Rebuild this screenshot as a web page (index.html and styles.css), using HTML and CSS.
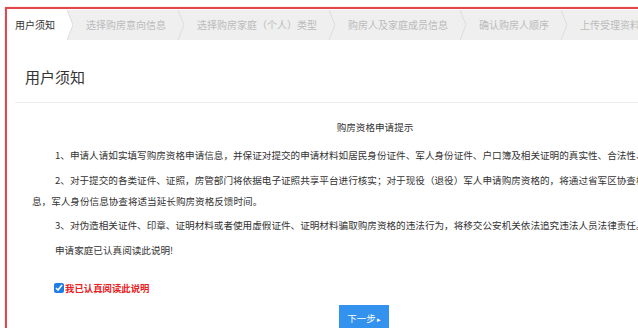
FILE: index.html
```html
<!DOCTYPE html>
<html lang="zh-CN">
<head>
<meta charset="utf-8">
<title>用户须知</title>
<link rel="stylesheet" href="styles.css">
</head>
<body>
<div class="frame">
  <div class="steps">
    <div class="step active first">用户须知</div>
    <svg class="chev" width="6" height="30" viewBox="0 0 6 30"><polygon points="0,0 6,15 0,30" fill="#fff"/><polyline points="0,0 6,15 0,30" fill="none" stroke="#dcdcdc" stroke-width="1"/></svg>
    <div class="step">选择购房意向信息</div>
    <svg class="chev" width="6" height="30" viewBox="0 0 6 30"><polyline points="0,0 6,15 0,30" fill="none" stroke="#dcdcdc" stroke-width="1"/></svg>
    <div class="step">选择购房家庭（个人）类型</div>
    <svg class="chev" width="6" height="30" viewBox="0 0 6 30"><polyline points="0,0 6,15 0,30" fill="none" stroke="#dcdcdc" stroke-width="1"/></svg>
    <div class="step">购房人及家庭成员信息</div>
    <svg class="chev" width="6" height="30" viewBox="0 0 6 30"><polyline points="0,0 6,15 0,30" fill="none" stroke="#dcdcdc" stroke-width="1"/></svg>
    <div class="step">确认购房人顺序</div>
    <svg class="chev" width="6" height="30" viewBox="0 0 6 30"><polyline points="0,0 6,15 0,30" fill="none" stroke="#dcdcdc" stroke-width="1"/></svg>
    <div class="step">上传受理资料</div>
  </div>
  <div class="head">
    <h2 class="head-title">用户须知</h2>
  </div>
  <div class="notice">
    <div class="notice-title">购房资格申请提示</div>
    <p class="para">1、申请人请如实填写购房资格申请信息，并保证对提交的申请材料如居民身份证件、军人身份证件、户口簿及相关证明的真实性、合法性、有效性负责。</p>
    <p class="para">2、对于提交的各类证件、证照，房管部门将依据电子证照共享平台进行核实；对于现役（退役）军人申请购房资格的，将通过省军区协查核实军人身份信息，军人身份信息协查将适当延长购房资格反馈时间。</p>
    <p class="para">3、对伪造相关证件、印章、证明材料或者使用虚假证件、证明材料骗取购房资格的违法行为，将移交公安机关依法追究违法人员法律责任。</p>
    <p class="para">申请家庭已认真阅读此说明!</p>
    <label class="agree"><input type="checkbox" class="agree-box" checked><span class="agree-text">我已认真阅读此说明</span></label>
    <div class="actions">
      <button class="btn-next" type="button">下一步<span class="btn-arrow">▸</span></button>
    </div>
  </div>
</div>
</body>
</html>
```
FILE: styles.css
```css
html, body {
  margin: 0;
  padding: 0;
  overflow: hidden;
  background: #fff;
}
body {
  font-family: "Noto Sans CJK SC", "Noto Sans", sans-serif;
  color: #333;
}
.frame {
  margin: 7px 0 0 5px;
  width: 728px;
  height: 340px;
  border: 2px solid #e2474b;
  border-right: none;
  border-bottom: none;
  box-shadow: 0 0 1px #f4a0a0;
  padding-top: 1px;
}
.steps {
  display: flex;
  align-items: center;
  height: 30px;
  background: #efefef;
}
.step {
  font-size: 10px;
  line-height: 30px;
  color: #bbb;
  padding: 0 12px 0 13px;
  white-space: nowrap;
}
.step.active {
  background: #fff;
  color: #333;
}
.step.first {
  padding-left: 8px;
}
.chev {
  display: block;
  flex: none;
}
.head {
  margin-left: 8px;
  padding: 26px 0 14px 10px;
  border-bottom: 1px solid #ececec;
}
.head-title {
  margin: 0;
  font-size: 15px;
  line-height: 22px;
  font-weight: normal;
  color: #333;
}
.notice {
  padding: 14px 17px 0 25px;
  font-size: 9.6px;
  line-height: 21px;
}
.notice-title {
  text-align: center;
  margin-bottom: 7px;
}
.para {
  margin: 0 0 3.5px;
  text-indent: 23px;
}
.agree {
  display: flex;
  align-items: center;
  margin: 17px 0 0 22px;
  height: 21px;
}
.agree-box {
  margin: 0 1px 0 0;
  width: 10px;
  height: 10px;
  accent-color: #1f7de8;
}
.agree-text {
  color: #e8201e;
  font-weight: bold;
  font-size: 9.4px;
}
.actions {
  margin: 6px 0 0 307px;
}
.btn-next {
  display: block;
  width: 50px;
  height: 26px;
  border: none;
  background: #3392ee;
  color: #fff;
  font-family: inherit;
  font-size: 9.5px;
  padding: 0;
  text-align: center;
}
.btn-arrow {
  font-size: 7px;
  margin-left: 1px;
}
```
